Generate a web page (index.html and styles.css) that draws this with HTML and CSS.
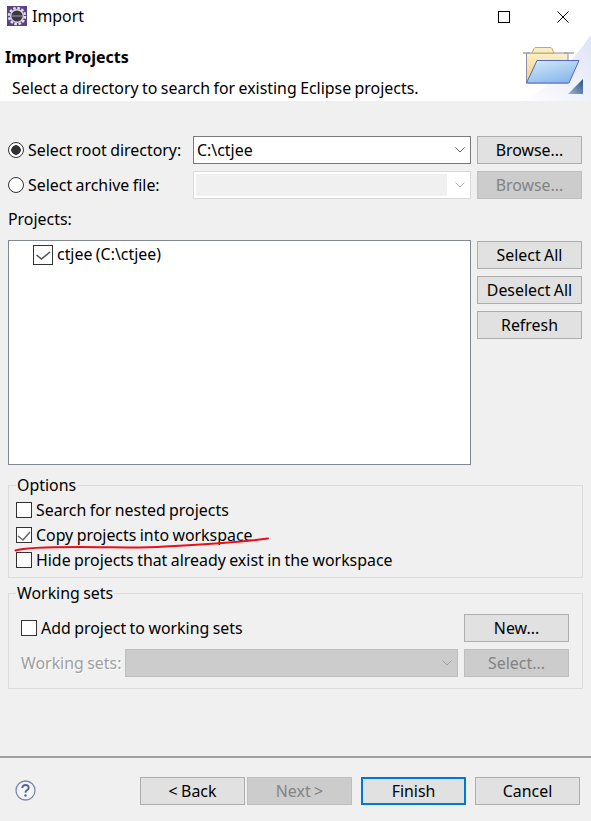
FILE: index.html
```html
<!DOCTYPE html>
<html lang="en">
<head>
    <meta charset="UTF-8">
    <meta name="viewport" content="width=device-width, initial-scale=1.0">
    <title>Import</title>
    <link rel="stylesheet" href="styles.css">
</head>
<body>

    <div class="titlebar">
        <svg class="app-icon" width="20" height="20" viewBox="0 0 20 20">
            <rect width="20" height="20" fill="#5a4288"/>
            <circle cx="10" cy="10" r="8" fill="none" stroke="#e4e2ea" stroke-width="2.4" stroke-dasharray="2.6 1.6"/>
            <circle cx="10" cy="10" r="7" fill="#d8d6de"/>
            <circle cx="10" cy="10" r="5.6" fill="#3a3644"/>
            <rect x="4.6" y="9.4" width="10.8" height="1.2" fill="#8d8a9c"/>
        </svg>
        <span class="window-title">Import</span>
        <svg class="win-btn win-max" width="12" height="12" viewBox="0 0 12 12">
            <rect x="0.5" y="0.5" width="11" height="11" fill="none" stroke="#000"/>
        </svg>
        <svg class="win-btn win-close" width="12" height="12" viewBox="0 0 12 12">
            <path d="M0.5 0.5L11.5 11.5M11.5 0.5L0.5 11.5" stroke="#000" fill="none"/>
        </svg>
    </div>

    <div class="banner">
        <div class="banner-text">
            <h1>Import Projects</h1>
            <p>Select a directory to search for existing Eclipse projects.</p>
        </div>
        <svg class="banner-art" width="71" height="68" viewBox="0 0 71 68">
            <defs>
                <linearGradient id="backFold" x1="0" y1="0" x2="0" y2="1">
                    <stop offset="0" stop-color="#fdf0c8"/>
                    <stop offset="1" stop-color="#eecb84"/>
                </linearGradient>
                <linearGradient id="frontFold" x1="0" y1="0" x2="0.6" y2="1">
                    <stop offset="0" stop-color="#d6ecfb"/>
                    <stop offset="1" stop-color="#8ab8ea"/>
                </linearGradient>
                <linearGradient id="corner" x1="0" y1="1" x2="1" y2="0">
                    <stop offset="0" stop-color="#9db6d8"/>
                    <stop offset="1" stop-color="#24508c"/>
                </linearGradient>
                <linearGradient id="swoosh" x1="0" y1="1" x2="1" y2="0">
                    <stop offset="0" stop-color="#ffffff"/>
                    <stop offset="1" stop-color="#dfe3f4"/>
                </linearGradient>
            </defs>
            <path d="M0 68C24 62 50 30 71 2V68Z" fill="url(#swoosh)"/>
            <path d="M6.500 50V20H48V50Z" fill="url(#backFold)" stroke="#8f8da6"/>
            <path d="M12 20L14 15.500Q14.500 14.500 16 14.500H30Q31.500 14.500 32 15.500L34 20Z" fill="#fbeec6" stroke="#c9a860"/>
            <path d="M3 20H10M44 20H54" stroke="#a5a5ad" stroke-width="1.500"/>
            <path d="M17 27.500H59L49 50H6.500Z" fill="url(#frontFold)" stroke="#5468c0"/>
            <path d="M48 61H63V46Z" fill="url(#corner)"/>
        </svg>
    </div>

    <div class="content">
        <div class="source-row">
            <label class="source-label"><span class="radio radio-on"></span>Select root directory:</label>
            <div class="combo">
                <span class="combo-value">C:\ctjee</span>
                <svg class="chevron" width="10" height="6" viewBox="0 0 10 6"><path d="M0.500 0.500L5 5L9.500 0.500" fill="none" stroke="#606060"/></svg>
            </div>
            <button class="btn">Browse...</button>
        </div>
        <div class="source-row">
            <label class="source-label"><span class="radio"></span>Select archive file:</label>
            <div class="combo combo-off">
                <span class="combo-value"></span>
                <svg class="chevron" width="10" height="6" viewBox="0 0 10 6"><path d="M0.500 0.500L5 5L9.500 0.500" fill="none" stroke="#b4b4b4"/></svg>
            </div>
            <button class="btn btn-off">Browse...</button>
        </div>

        <div class="projects-label">Projects:</div>
        <div class="projects">
            <div class="project-list">
                <div class="project-item">
                    <span class="check check-tree"><svg width="18" height="18" viewBox="0 0 18 18"><path d="M2.500 9L7.500 13L16 6" fill="none" stroke="#555" stroke-width="1.600"/></svg></span>
                    ctjee (C:\ctjee)
                </div>
            </div>
            <div class="project-actions">
                <button class="btn">Select All</button>
                <button class="btn">Deselect All</button>
                <button class="btn">Refresh</button>
            </div>
        </div>

        <fieldset class="group group-options">
            <legend>Options</legend>
            <div class="option"><span class="check"></span>Search for nested projects</div>
            <div class="option"><span class="check"><svg width="14" height="14" viewBox="0 0 14 14"><path d="M1 8L6 12L13 4" fill="none" stroke="#666" stroke-width="1.500"/></svg></span>Copy projects into workspace</div>
            <div class="option"><span class="check"></span>Hide projects that already exist in the workspace</div>
        </fieldset>

        <fieldset class="group group-sets">
            <legend>Working sets</legend>
            <div class="sets-row">
                <div class="option sets-check"><span class="check"></span>Add project to working sets</div>
                <button class="btn">New...</button>
            </div>
            <div class="sets-row">
                <span class="sets-label">Working sets:</span>
                <div class="sets-select">
                    <svg class="chevron" width="10" height="6" viewBox="0 0 10 6"><path d="M0.500 0.500L5 5L9.500 0.500" fill="none" stroke="#a0a0a0"/></svg>
                </div>
                <button class="btn btn-off">Select...</button>
            </div>
        </fieldset>
    </div>

    <div class="footer">
        <svg class="help" width="21" height="21" viewBox="0 0 21 21">
            <circle cx="10.500" cy="10.500" r="9.500" fill="#f4f5f8" stroke="#7c8aa8" stroke-width="1.300"/>
            <path d="M7.300 8Q7.500 5 10.500 5Q13.700 5 13.700 7.700Q13.700 9.300 11.800 10.300Q10.500 11 10.500 12.700" fill="none" stroke="#56688c" stroke-width="1.900"/>
            <circle cx="10.500" cy="15.500" r="1.200" fill="#56688c"/>
        </svg>
        <button class="btn">&lt; Back</button>
        <button class="btn btn-off btn-next">Next &gt;</button>
        <button class="btn btn-default">Finish</button>
        <button class="btn btn-cancel">Cancel</button>
    </div>

    <!-- red pen mark on top of the dialog -->
    <svg class="pen-mark" width="591" height="821" viewBox="0 0 591 821">
        <path d="M15.500 550.500C24 547.500 50 547 80 547C115 547 135 548.500 165 546.500C200 544.500 240 542.500 268 538.500" fill="none" stroke="#ea0f1c" stroke-width="2" stroke-linecap="round"/>
    </svg>

</body>
</html>
```

FILE: styles.css
```css
* {
    box-sizing: border-box;
}
html, body {
    margin: 0;
    padding: 0;
}
body {
    position: relative;
    width: 591px;
    height: 821px;
    overflow: hidden;
    display: flex;
    flex-direction: column;
    background-color: #f0f0f0;
    color: #000;
    font-family: "Noto Sans", "Open Sans", Arial, sans-serif;
    font-size: 15.9px;
    word-spacing: -0.7px;
}

.titlebar {
    height: 33px;
    flex: none;
    display: flex;
    align-items: center;
    background-color: #fff;
    padding-left: 7px;
}
.app-icon {
    margin-top: -1px;
}
.window-title {
    margin-left: 5px;
    margin-top: -1px;
}
.win-btn {
    flex: none;
}
.win-max {
    margin-left: auto;
}
.win-close {
    margin-left: 47px;
    margin-right: 22px;
}

.banner {
    height: 68px;
    flex: none;
    display: flex;
    background-color: #fff;
}
.banner-text {
    flex: 1;
    padding-left: 5px;
}
.banner h1 {
    margin: 13px 0 0;
    font-size: 16px;
    line-height: 22px;
    font-weight: 700;
}
.banner p {
    margin: 9px 0 0 7px;
    line-height: 22px;
}
.banner-art {
    flex: none;
}

.content {
    flex: 1;
    padding: 35px 8px 0;
}
.source-row {
    display: flex;
    height: 28px;
    margin-bottom: 7px;
}
.source-label {
    width: 185px;
    display: flex;
    align-items: center;
}
.radio {
    width: 16px;
    height: 16px;
    margin-right: 4px;
    flex: none;
    border: 1px solid #333;
    border-radius: 50%;
    background-color: #fff;
}
.radio-on {
    background: radial-gradient(circle, #333 0 4.500px, #fff 5px);
}

.combo {
    width: 278px;
    height: 28px;
    display: flex;
    align-items: center;
    border: 1px solid #7a7a7a;
    background-color: #fff;
    padding-right: 5px;
}
.combo-value {
    flex: 1;
    padding-left: 3px;
}
.combo-off {
    border-color: #d9d9d9;
    padding: 2px 5px 2px 2px;
}
.combo-off .combo-value {
    height: 100%;
    margin-right: 8px;
    background-color: #f0f0f0;
}

.btn {
    width: 105px;
    height: 28px;
    flex: none;
    padding: 0;
    border: 1px solid #adadad;
    background-color: #e1e1e1;
    color: #000;
    font: inherit;
    word-spacing: inherit;
}
.btn-off {
    border-color: #bfbfbf;
    background-color: #ccc;
    color: #838383;
}
.source-row .btn {
    margin-left: 6px;
}

.projects-label {
    height: 34px;
    line-height: 26px;
}
.projects {
    display: flex;
}
.project-list {
    width: 463px;
    height: 225px;
    border: 1px solid #828790;
    background-color: #fff;
}
.project-item {
    display: flex;
    align-items: center;
    height: 25px;
    padding-left: 24px;
}
.project-item .check {
    width: 20px;
    height: 20px;
    margin-right: 4px;
    margin-top: 3px;
    border-color: #333;
}
.project-actions {
    margin-left: 6px;
    padding-top: 1px;
    display: flex;
    flex-direction: column;
    gap: 7px;
}

.group {
    margin: 0;
    padding: 0;
    min-width: 0;
    border: 1px solid #dcdcdc;
    width: 575px;
}
.group legend {
    padding: 0 1px;
    line-height: 20px;
}
.group-options {
    margin-top: 10px;
    padding: 2px 0 5px 7px;
}
.group-sets {
    margin-top: 5px;
    padding: 11px 13px 11px 12px;
}
.group-sets legend {
    margin-left: -5px;
}

.option {
    display: flex;
    align-items: center;
    height: 25px;
}
.check {
    width: 16px;
    height: 16px;
    margin-right: 4px;
    flex: none;
    display: flex;
    align-items: center;
    justify-content: center;
    border: 1px solid #333;
    background-color: #fff;
}

.sets-row {
    display: flex;
    align-items: center;
    height: 28px;
    margin-bottom: 7px;
}
.sets-row:last-child {
    margin-bottom: 0;
}
.sets-check {
    flex: 1;
}
.sets-row .btn {
    margin-left: 6px;
}
.sets-label {
    width: 104px;
    flex: none;
    color: #a0a0a0;
    text-shadow: 1px 1px 0 #fff;
}
.sets-select {
    flex: 1;
    height: 28px;
    display: flex;
    align-items: center;
    justify-content: flex-end;
    padding-right: 5px;
    border: 1px solid #bfbfbf;
    background-color: #ccc;
}

.footer {
    height: 65px;
    flex: none;
    display: flex;
    align-items: flex-start;
    padding: 19px 11px 0 15px;
    border-top: 2px solid #a0a0a0;
}
.help {
    margin-top: 3px;
    margin-right: 104px;
}
.btn-next {
    margin-left: 2px;
}
.btn-default {
    margin-left: 9px;
    border: 2px solid #0078d7;
}
.btn-cancel {
    margin-left: 9px;
}

.pen-mark {
    position: absolute;
    left: 0;
    top: 0;
    pointer-events: none;
}
```
